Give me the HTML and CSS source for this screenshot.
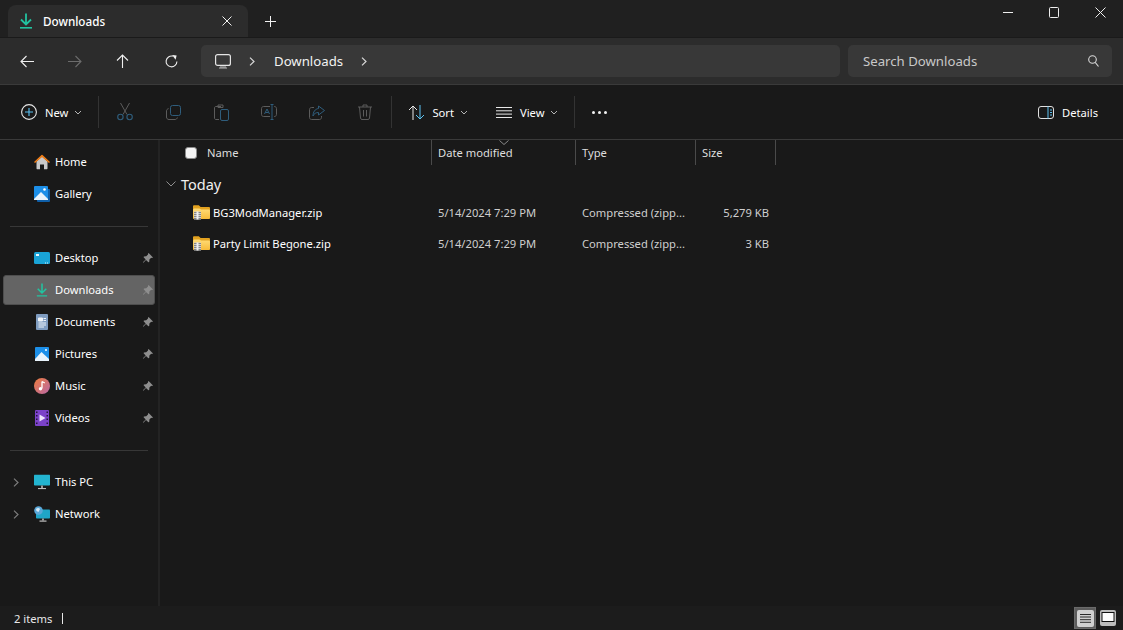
FILE: index.html
```html
<!DOCTYPE html>
<html lang="en">
<head>
<meta charset="utf-8">
<title>Downloads</title>
<link rel="stylesheet" href="styles.css">
</head>
<body>
<svg class="defs" width="0" height="0" aria-hidden="true">
  <defs>
    <linearGradient id="zipbody" x1="0" y1="0" x2="0" y2="1"><stop offset="0" stop-color="#ffdc78"/><stop offset="1" stop-color="#f7bb3a"/></linearGradient>
    <symbol id="pin" viewBox="0 0 12 12"><path d="M6.6 1 11 5.4 10 6 9.2 5.8 7.4 7.6 7.2 10 6.4 10.2 4 7.9 1.3 10.7.9 10.3 3.7 7.6 1.6 5.2 1.9 4.5 4.2 4.3 6 2.6 6 1.7Z" fill="#8e8e8e"/></symbol>
    <symbol id="zip" viewBox="0 0 17 15">
      <path d="M0 1.500C0 .7.500.2 1.200.2H5.800L7.600 2H15.800C16.500 2 17 2.500 17 3.200V6H0Z" fill="#e2a11f"/>
      <path d="M0 5.200C0 4 .7 3.500 1.500 3.500H6.500L8 4.600H15.800C16.500 4.600 17 5.100 17 5.800V13C17 13.600 16.500 14 15.800 14H1.200C.5 14 0 13.600 0 13Z" fill="url(#zipbody)"/>
      <rect x="1" y="6.500" width="7" height="8" fill="#cfcfcf"/>
      <path d="M1 7.500H8M1 9.500H8M1 11.500H8M1 13.500H8" stroke="#7d7d7d" stroke-width=".9"/>
      <rect x="3.500" y="6.500" width="2" height="8" fill="#efefef"/>
    </symbol>
    <symbol id="chev-d" viewBox="0 0 8 5"><path d="M1 1 4 4 7 1" fill="none" stroke="#b5b5b5" stroke-width="1"/></symbol>
    <symbol id="chev-r" viewBox="0 0 6 9"><path d="M1 .6 5 4.500 1 8.400" fill="none" stroke="currentColor" stroke-width="1.200"/></symbol>
    <symbol id="dl" viewBox="0 0 14 16"><path d="M7 .5V11M2 6.500 7 11.500 12 6.500" fill="none" stroke="#22c3a0" stroke-width="1.800"/><path d="M1 14.800H13" stroke="#22c3a0" stroke-width="1.600"/></symbol>
  </defs>
</svg>

<div class="window">
  <header class="titlebar">
    <div class="tab">
      <svg class="tab-icon" width="14" height="16"><use href="#dl"/></svg>
      <span class="tab-title">Downloads</span>
      <svg class="tab-close" width="10" height="10" viewBox="0 0 10 10"><path d="M.5.500 9.500 9.500M9.500.500.5 9.500" stroke="#f2f2f2" stroke-width="1"/></svg>
    </div>
    <svg class="tab-add" width="11" height="11" viewBox="0 0 11 11"><path d="M5.500 0V11M0 5.500H11" stroke="#f2f2f2" stroke-width="1"/></svg>
    <div class="caption">
      <span class="cap-btn"><svg width="10" height="10" viewBox="0 0 10 10"><path d="M0 5.500H10" stroke="#eee" stroke-width="1"/></svg></span>
      <span class="cap-btn"><svg width="10" height="11" viewBox="0 0 10 11"><rect x=".5" y=".5" width="9" height="10" rx="1" fill="none" stroke="#eee"/></svg></span>
      <span class="cap-btn"><svg width="11" height="11" viewBox="0 0 11 11"><path d="M.5.500 10.500 10.500M10.500.500.5 10.500" stroke="#eee" stroke-width="1"/></svg></span>
    </div>
  </header>

  <nav class="navbar">
    <div class="nav-buttons">
      <span class="nav-btn"><svg width="14" height="13" viewBox="0 0 14 13"><path d="M14 6.500H1M6.500 1 1 6.500 6.500 12" fill="none" stroke="#f0f0f0" stroke-width="1.100"/></svg></span>
      <span class="nav-btn"><svg width="14" height="13" viewBox="0 0 14 13"><path d="M0 6.500H13M7.500 1 13 6.500 7.500 12" fill="none" stroke="#6c6c6c" stroke-width="1.100"/></svg></span>
      <span class="nav-btn"><svg width="14" height="14" viewBox="0 0 14 14"><path d="M6.500 14V1M1 6.500 6.500 1 12 6.500" fill="none" stroke="#f0f0f0" stroke-width="1.100"/></svg></span>
      <span class="nav-btn"><svg width="13" height="13" viewBox="0 0 13 13"><path d="M7.800 1.200A5.400 5.400 0 1 0 11.900 6.500" fill="none" stroke="#f0f0f0" stroke-width="1.100"/><path d="M7.400 0 12 .6 11 4.800Z" fill="#f0f0f0" transform="translate(-.4 -.1)"/></svg></span>
    </div>
    <div class="address">
      <svg class="addr-pc" width="16" height="15" viewBox="0 0 16 15"><rect x=".6" y=".6" width="14.800" height="10.800" rx="2" fill="none" stroke="#e4e4e4" stroke-width="1.200"/><path d="M4 14H12M6 12V14M8 12V14M10 12V14" stroke="#b9b9b9" stroke-width="1"/></svg>
      <svg class="addr-chev" width="6" height="9"><use href="#chev-r"/></svg>
      <span class="addr-text">Downloads</span>
      <svg class="addr-chev" width="6" height="9"><use href="#chev-r"/></svg>
    </div>
    <div class="search">
      <span class="search-text">Search Downloads</span>
      <svg width="11" height="12" viewBox="0 0 11 12"><circle cx="4.500" cy="4.500" r="3.800" fill="none" stroke="#d8d8d8" stroke-width="1.100"/><path d="M7.200 7.400 10.500 11.500" stroke="#d8d8d8" stroke-width="1.100"/></svg>
    </div>
  </nav>

  <div class="toolbar">
    <button class="tool tool-new">
      <svg width="16" height="16" viewBox="0 0 16 16"><circle cx="8" cy="8" r="7.400" fill="none" stroke="#e8e8e8" stroke-width="1.100"/><path d="M8 4V12M4 8H12" stroke="#5cc2f2" stroke-width="1.100"/></svg>
      <span>New</span>
      <svg class="caret" width="8" height="5"><use href="#chev-d"/></svg>
    </button>
    <span class="sep sep-new"></span>
    <div class="tool-icons">
      <span class="ico-btn"><svg width="16" height="18" viewBox="0 0 16 18"><path d="M3.500 0 10 11.500M12.500 0 6 11.500" stroke="#5c5c5c" fill="none"/><circle cx="3.400" cy="14" r="2.700" fill="none" stroke="#2f5d7c" stroke-width="1.100"/><circle cx="12.600" cy="14" r="2.700" fill="none" stroke="#2f5d7c" stroke-width="1.100"/></svg></span>
      <span class="ico-btn"><svg width="15" height="15" viewBox="0 0 15 15"><rect x="4.500" y=".5" width="10" height="10" rx="2" fill="none" stroke="#2f5d7c"/><path d="M2.600 3.600C1.200 4 .5 4.800.5 6V12C.5 13.500 1.500 14.500 3 14.500H9C10.200 14.500 11 13.800 11.400 12.500" fill="none" stroke="#5c5c5c"/></svg></span>
      <span class="ico-btn"><svg width="15" height="17" viewBox="0 0 15 17"><path d="M7 2.500H2C1 2.500.5 3 .5 4V14C.5 15 1 15.500 2 15.500H5M4 1H9V3.500H4Z" fill="none" stroke="#5c5c5c"/><rect x="6.500" y="5.500" width="8" height="11" rx="1.500" fill="none" stroke="#2f5d7c"/></svg></span>
      <span class="ico-btn"><svg width="16" height="16" viewBox="0 0 16 16"><path d="M9 2.500H2.500C1.400 2.500.5 3.400.5 4.500V10.500C.5 11.600 1.400 12.500 2.500 12.500H9M13 2.500H13.500C14.600 2.500 15.500 3.400 15.500 4.500V10.500C15.500 11.600 14.600 12.500 13.500 12.500H13" fill="none" stroke="#5c5c5c"/><path d="M3.500 10 6 5 8.500 10M4.500 8.500H7.500" fill="none" stroke="#2f5d7c"/><path d="M9.500.5H12.500M11 .5V15.500M9.500 15.500H12.500" fill="none" stroke="#2f5d7c"/></svg></span>
      <span class="ico-btn"><svg width="16" height="15" viewBox="0 0 16 15"><path d="M5 2.500H2.500C1.400 2.500.5 3.400.5 4.500V12.500C.5 13.600 1.400 14.500 2.500 14.500H10.500C11.600 14.500 12.500 13.600 12.500 12.500V11" fill="none" stroke="#5c5c5c"/><path d="M9.500 1 15.500 5.500 9.500 10V7.500C7 7.500 5 8.500 4 11 4 7 6 4 9.500 3.500Z" fill="none" stroke="#2f5d7c"/></svg></span>
      <span class="ico-btn"><svg width="14" height="16" viewBox="0 0 14 16"><path d="M0 3H14M5 3V1H9V3M1.500 3 2.500 14C2.600 15 3.200 15.500 4 15.500H10C10.800 15.500 11.400 15 11.500 14L12.500 3M5.500 6V12.500M8.500 6V12.500" fill="none" stroke="#5c5c5c"/></svg></span>
    </div>
    <span class="sep sep-edit"></span>
    <button class="tool tool-sort">
      <svg width="17" height="15" viewBox="0 0 17 15"><path d="M5 15V1M1 5 5 1 9 5" fill="none" stroke="#e8e8e8"/><path d="M12 0V14M8 10 12 14 16 10" fill="none" stroke="#5cc2f2"/></svg>
      <span>Sort</span>
      <svg class="caret" width="8" height="5"><use href="#chev-d"/></svg>
    </button>
    <button class="tool tool-view">
      <svg width="16" height="11" viewBox="0 0 16 11"><path d="M0 .5H16M0 3.800H16M0 7.100H16M0 10.500H16" stroke="#e8e8e8"/></svg>
      <span>View</span>
      <svg class="caret" width="8" height="5"><use href="#chev-d"/></svg>
    </button>
    <span class="sep sep-view"></span>
    <span class="more"><i></i><i></i><i></i></span>
    <button class="tool tool-details">
      <svg width="16" height="13" viewBox="0 0 16 13"><rect x=".5" y=".5" width="15" height="12" rx="2.500" fill="none" stroke="#e0e0e0"/><path d="M10 .5V12.500" stroke="#5cc2f2"/><path d="M12 4H14M12 6.500H14M12 9H14" stroke="#5cc2f2"/></svg>
      <span>Details</span>
    </button>
  </div>

  <main class="content">
    <aside class="sidebar">
      <div class="side-row">
        <svg class="side-icon" width="16" height="15" viewBox="0 0 16 15"><path d="M2.500 7V14C2.500 14.500 3 15 3.500 15H6V10H10V15H12.500C13 15 13.500 14.500 13.500 14V7L8 2Z" fill="#c9c9c9"/><path d="M0 7.500 8 0 16 7.500 15 8.500 8 2.500 1 8.500Z" fill="#ef7d17"/></svg>
        <span class="side-label">Home</span>
      </div>
      <div class="side-row">
        <svg class="side-icon" width="16" height="16" viewBox="0 0 16 16"><rect x="3" y="3" width="13" height="13" rx="1" fill="#0f5fa8"/><rect width="14" height="14" rx="1" fill="#1c8fe8"/><path d="M0 13 7 6 14 13V14H0Z" fill="#e8f3fb"/><circle cx="10.500" cy="3.500" r="1.300" fill="#fff"/></svg>
        <span class="side-label">Gallery</span>
      </div>
      <hr class="side-divider">
      <div class="side-row">
        <svg class="side-icon" width="16" height="12" viewBox="0 0 16 12"><rect width="16" height="12" rx="1.500" fill="#19a3d6"/><rect x="2" y="2" width="3" height="2" fill="#e8f7fd"/><path d="M11 10.500h1v1h-1zM13 10.500h1v1h-1z" fill="#d8f0fa"/></svg>
        <span class="side-label">Desktop</span>
        <svg class="pin" width="12" height="12"><use href="#pin"/></svg>
      </div>
      <div class="side-row selected">
        <svg class="side-icon" width="12" height="15"><use href="#dl"/></svg>
        <span class="side-label">Downloads</span>
        <svg class="pin" width="12" height="12"><use href="#pin"/></svg>
      </div>
      <div class="side-row">
        <svg class="side-icon" width="12" height="16" viewBox="0 0 12 16"><rect width="12" height="16" rx="1" fill="#7f9cc0"/><path d="M2.500 4H6.500V7H2.500ZM7.500 4.500H10M7.500 6.500H10M2.500 9H10M2.500 11H10M2.500 13H8" stroke="#eef3f8" fill="#eef3f8" stroke-width="1"/></svg>
        <span class="side-label">Documents</span>
        <svg class="pin" width="12" height="12"><use href="#pin"/></svg>
      </div>
      <div class="side-row">
        <svg class="side-icon" width="14" height="14" viewBox="0 0 14 14"><rect width="14" height="14" rx="1" fill="#1c8fe8"/><path d="M0 12 6.500 5 14 12V14H0Z" fill="#e8f3fb"/><circle cx="11" cy="3" r="1" fill="#fff"/></svg>
        <span class="side-label">Pictures</span>
        <svg class="pin" width="12" height="12"><use href="#pin"/></svg>
      </div>
      <div class="side-row">
        <svg class="side-icon" width="16" height="16" viewBox="0 0 16 16"><defs><linearGradient id="mus" x1="0" y1="0" x2="1" y2="1"><stop offset="0" stop-color="#ee7c3c"/><stop offset="1" stop-color="#b868a8"/></linearGradient></defs><circle cx="8" cy="8" r="8" fill="url(#mus)"/><path d="M8 3.500V10.500M8 3.500 10.800 5" stroke="#fff" stroke-width="1.300" fill="none"/><circle cx="6.500" cy="10.800" r="1.700" fill="#fff"/></svg>
        <span class="side-label">Music</span>
        <svg class="pin" width="12" height="12"><use href="#pin"/></svg>
      </div>
      <div class="side-row">
        <svg class="side-icon" width="14" height="16" viewBox="0 0 14 16"><rect width="14" height="16" rx="1" fill="#7b42c9"/><path d="M4.500 4.500 10.500 8 4.500 11.500Z" fill="#ece2fb"/><path d="M1 1.500h1.500v1.500H1zM1 5h1.500v1.500H1zM1 8.500h1.500V10H1zM1 12.500h1.500V14H1zM11.500 1.500H13v1.500h-1.500zM11.500 5H13v1.500h-1.500zM11.500 8.500H13V10h-1.500zM11.500 12.500H13V14h-1.500z" fill="#23143a"/></svg>
        <span class="side-label">Videos</span>
        <svg class="pin" width="12" height="12"><use href="#pin"/></svg>
      </div>
      <hr class="side-divider">
      <div class="side-row">
        <svg class="expander" width="6" height="9"><use href="#chev-r"/></svg>
        <svg class="side-icon" width="16" height="15" viewBox="0 0 16 15"><rect width="16" height="11" rx=".8" fill="#23b4d0"/><rect x="7" y="11" width="2" height="2.500" fill="#9a9a9a"/><rect x="4" y="13.500" width="8" height="1.200" fill="#bdbdbd"/></svg>
        <span class="side-label">This PC</span>
      </div>
      <div class="side-row">
        <svg class="expander" width="6" height="9"><use href="#chev-r"/></svg>
        <svg class="side-icon" width="16" height="16" viewBox="0 0 16 16"><rect x="2" y="3.500" width="14" height="9" rx=".8" fill="#1fa5c8"/><rect x="8" y="12.500" width="2" height="2" fill="#9a9a9a"/><rect x="5.500" y="14.500" width="7" height="1.200" fill="#bdbdbd"/><circle cx="4.500" cy="4.500" r="4.300" fill="#5aa7d8"/><path d="M2 3C3.500 1.500 5 1.500 6 3L4.500 6 2.500 5Z" fill="#d6e9f5"/></svg>
        <span class="side-label">Network</span>
      </div>
    </aside>

    <section class="files">
      <div class="file-grid header-row">
        <div class="col col-name">
          <span class="checkbox"></span>
          <span>Name</span>
        </div>
        <div class="col col-date">
          <svg class="sort-caret" width="10" height="5" viewBox="0 0 10 5"><path d="M.5.500 5 4.500 9.500.5" fill="none" stroke="#8a8a8a"/></svg>
          <span>Date modified</span>
        </div>
        <div class="col">Type</div>
        <div class="col">Size</div>
      </div>

      <div class="group">
        <svg width="10" height="6" viewBox="0 0 10 6"><path d="M.5.500 5 5 9.500.5" fill="none" stroke="#8f8f8f"/></svg>
        <span>Today</span>
      </div>

      <div class="file-grid file-row">
        <div class="cell cell-name"><svg width="17" height="15"><use href="#zip"/></svg><span>BG3ModManager.zip</span></div>
        <div class="cell">5/14/2024 7:29 PM</div>
        <div class="cell">Compressed (zipp...</div>
        <div class="cell cell-size">5,279 KB</div>
      </div>
      <div class="file-grid file-row">
        <div class="cell cell-name"><svg width="17" height="15"><use href="#zip"/></svg><span>Party Limit Begone.zip</span></div>
        <div class="cell">5/14/2024 7:29 PM</div>
        <div class="cell">Compressed (zipp...</div>
        <div class="cell cell-size">3 KB</div>
      </div>
    </section>
  </main>

  <footer class="statusbar">
    <span class="status-text">2 items</span>
    <span class="status-sep"></span>
    <div class="view-toggle">
      <span class="vt vt-active"><svg width="17" height="17" viewBox="0 0 17 17"><rect width="17" height="17" rx="2" fill="#d0d0d0"/><path d="M3 4.500H14M3 7H14M3 9.700H14M3 12.300H14" stroke="#2a2a2a" stroke-width="1"/></svg></span>
      <span class="vt"><svg width="16" height="16" viewBox="0 0 16 16"><rect width="16" height="16" rx="2" fill="#bdbdbd"/><rect x="2" y="2.500" width="12" height="9" fill="#fdfdfd" stroke="#111"/></svg></span>
    </div>
  </footer>
</div>
</body>
</html>
```

FILE: styles.css
```css
* { box-sizing: border-box; }

html, body {
  margin: 0;
  padding: 0;
  height: 100%;
}

body {
  background: #191919;
  color: #fff;
  font-family: "Noto Sans", "Open Sans", sans-serif;
  font-size: 11.2px;
  overflow: hidden;
}

.defs { position: absolute; }

svg { display: block; flex: none; }

.window {
  display: flex;
  flex-direction: column;
  width: 1123px;
  height: 630px;
}

/* Title bar */
.titlebar {
  display: flex;
  align-items: flex-end;
  height: 38px;
  padding-left: 8px;
  background: #202020;
  border-bottom: 1px solid #1a1a1a;
}

.tab {
  display: flex;
  align-items: center;
  width: 240px;
  height: 32px;
  padding: 0 16px 0 11px;
  background: #2c2c2c;
  border-radius: 8px 8px 0 0;
}

.tab-title {
  margin-left: 10px;
  flex: 1;
  font-size: 11.7px;
  font-weight: 500;
}

.tab-add { margin: 0 0 10px 17px; }

.caption {
  display: flex;
  align-self: flex-start;
  margin-left: auto;
}

.cap-btn {
  display: flex;
  align-items: center;
  justify-content: center;
  width: 46px;
  height: 24px;
}

/* Navigation bar */
.navbar {
  display: flex;
  align-items: center;
  height: 47px;
  padding: 0 11px 0 3px;
  background: #2c2c2c;
  border-bottom: 1px solid #3a3a3a;
}

.nav-buttons { display: flex; }

.nav-btn {
  display: flex;
  align-items: center;
  justify-content: center;
  width: 48px;
  height: 32px;
}

.address {
  display: flex;
  align-items: center;
  width: 639px;
  height: 32px;
  margin-left: 6px;
  padding-left: 14px;
  background: #383838;
  border-radius: 5px;
  color: #f2f2f2;
}

.addr-chev { color: #d8d8d8; margin-left: 18px; }
.addr-text { margin-left: 19px; font-size: 13.2px; }

.search {
  display: flex;
  align-items: center;
  justify-content: space-between;
  width: 264px;
  height: 32px;
  margin-left: 8px;
  padding: 0 13px 0 15px;
  background: #383838;
  border-radius: 5px;
}

.search-text { font-size: 13.2px; color: #c8c8c8; }

/* Command bar */
.toolbar {
  display: flex;
  align-items: center;
  height: 55px;
  background: #191919;
  border-bottom: 1px solid #3a3a3a;
}

.tool {
  display: flex;
  align-items: center;
  padding: 0;
  border: 0;
  background: none;
  color: #fff;
  font: inherit;
}

.tool-new { margin-left: 21px; }
.tool-new span { margin: 0 6px 0 8px; }

.sep {
  width: 1px;
  height: 32px;
  background: #333;
}

.sep-new { margin-left: 16px; }
.sep-edit { margin-left: 2px; }
.sep-view { margin-left: 16px; }

.tool-icons {
  display: flex;
  margin-left: 2px;
}

.ico-btn {
  display: flex;
  align-items: center;
  justify-content: center;
  width: 48px;
  height: 32px;
}

.tool-sort { margin-left: 16px; }
.tool-sort span { margin: 0 6px 0 7px; }

.tool-view { margin-left: 28px; }
.tool-view span { margin: 0 6px 0 8px; }

.caret { margin-top: 1px; }

.more {
  display: flex;
  gap: 3px;
  margin-left: 17px;
}

.more i {
  display: block;
  width: 3px;
  height: 3px;
  border-radius: 50%;
  background: #f2f2f2;
}

.tool-details { margin-left: auto; margin-right: 25px; }
.tool-details span { margin-left: 8px; }

/* Content */
.content {
  display: flex;
  flex: 1;
  min-height: 0;
}

.sidebar {
  display: flex;
  flex-direction: column;
  width: 160px;
  padding: 6px 3px 0 3px;
  border-right: 2px solid #232323;
}

.side-row {
  display: flex;
  align-items: center;
  height: 32px;
  position: relative;
  padding-left: 52px;
  flex: none;
}

.side-icon {
  position: absolute;
  left: 39px;
  top: 50%;
  transform: translate(-50%, -50%);
}

.expander {
  position: absolute;
  left: 10px;
  top: 50%;
  margin-top: -4px;
  color: #7c7c7c;
}

.side-label {
  flex: 1;
  padding-bottom: 2px;
}

.pin { margin-right: 1px; }

.selected {
  height: 30px;
  margin: 1px 0;
  background: #646464;
  border: 1px solid #4e4e4e;
  border-radius: 3px;
  padding-left: 51px;
}

.selected .side-icon { left: 38px; }
.selected .pin { margin-right: 0; }

.side-divider {
  width: 138px;
  height: 1px;
  margin: 16px 0 15px 7px;
  border: 0;
  background: #373737;
  flex: none;
}

.files { flex: 1; }

.file-grid {
  display: grid;
  grid-template-columns: 272px 144px 120px 80px;
}

.header-row { height: 25px; }

.col {
  display: flex;
  align-items: center;
  position: relative;
  padding-left: 6px;
  border-right: 1px solid #4a4a4a;
  color: #dedede;
}

.col-name { padding-left: 25px; gap: 10px; }

.sort-caret {
  position: absolute;
  left: 67px;
  top: 0;
}

.checkbox {
  width: 12px;
  height: 12px;
  background: #f4f4f4;
  border: 1px solid #8a8a8a;
  border-radius: 3px;
}

.group {
  display: flex;
  align-items: center;
  gap: 5px;
  height: 32px;
  padding: 5px 0 0 6px;
  font-size: 14.5px;
  color: #f0f0f0;
}

.file-row {
  height: 31px;
  align-items: center;
}

.cell {
  padding-left: 6px;
  padding-bottom: 1px;
  color: #cfcfcf;
  white-space: nowrap;
}

.cell-name {
  display: flex;
  align-items: center;
  gap: 3px;
  padding-left: 33px;
  color: #fff;
}

.cell-size {
  padding: 0 7px 1px 0;
  text-align: right;
}

/* Status bar */
.statusbar {
  display: flex;
  align-items: center;
  height: 24px;
  padding-left: 14px;
  background: #1c1c1c;
  color: #e8e8e8;
}

.status-sep {
  width: 1px;
  height: 11px;
  margin-left: 10px;
  background: #e8e8e8;
}

.view-toggle {
  display: flex;
  align-items: center;
  gap: 1px;
  margin-left: auto;
  margin-right: 4px;
}

.vt {
  display: flex;
  align-items: center;
  justify-content: center;
  width: 22px;
  height: 22px;
}

.vt-active {
  background: #5c5c5c;
  border: 1px solid #6a6a6a;
}
```
